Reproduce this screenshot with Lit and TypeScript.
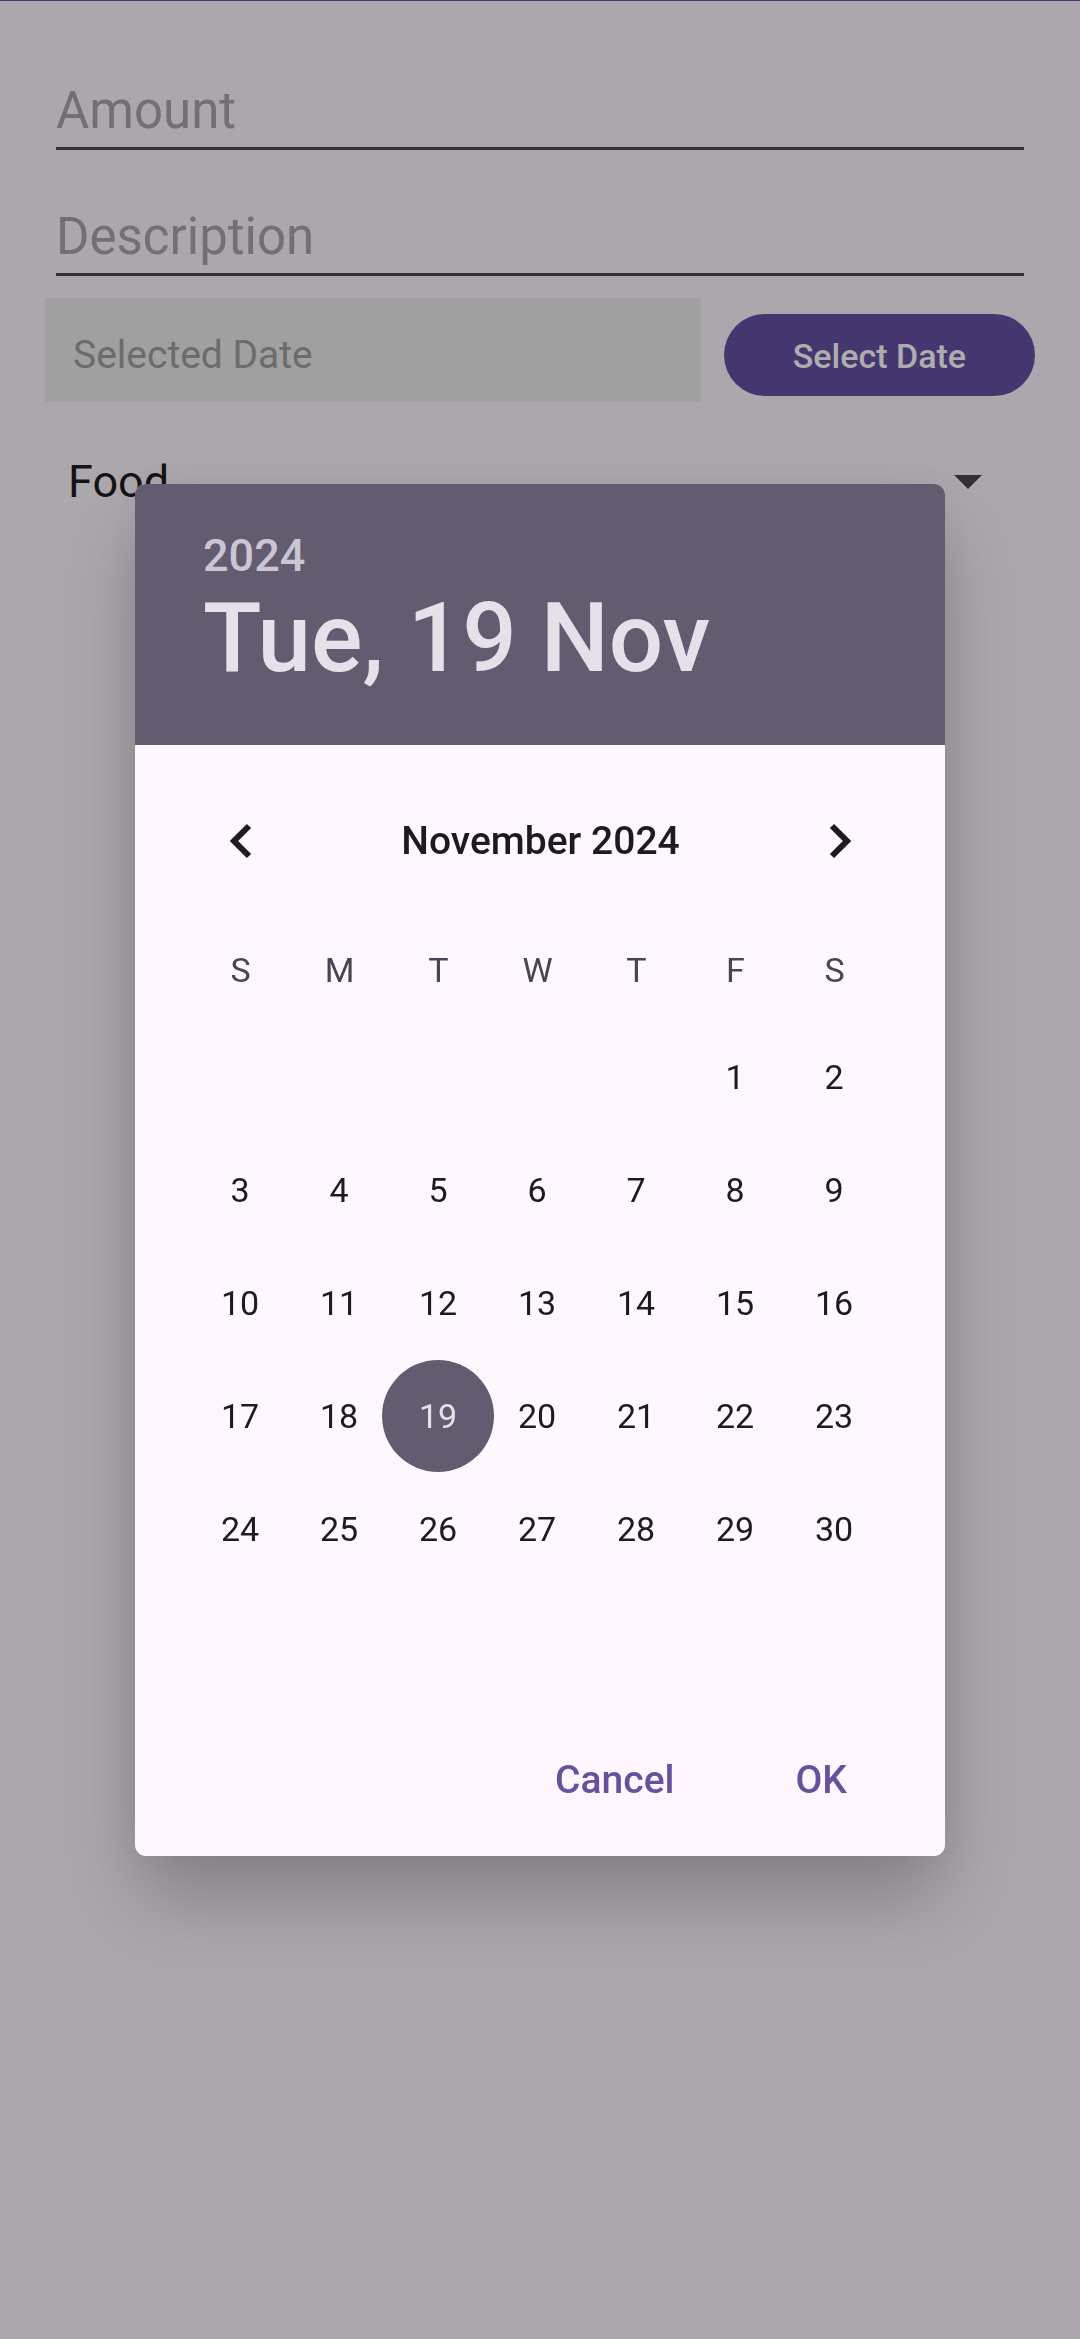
import { LitElement, html, css } from "lit";
import { customElement, property, state } from "lit/decorators.js";

const MONTHS = [
  "January", "February", "March", "April", "May", "June",
  "July", "August", "September", "October", "November", "December",
];
const WEEKDAYS = ["Sunday", "Monday", "Tuesday", "Wednesday", "Thursday", "Friday", "Saturday"];

/** Six calendar rows for a month; 0 stands for an empty cell. */
function monthRows(year: number, month: number): number[][] {
  const offset = new Date(year, month, 1).getDay();
  const count = new Date(year, month + 1, 0).getDate();
  return Array.from({ length: 6 }, (_, row) =>
    Array.from({ length: 7 }, (_, col) => {
      const day = row * 7 + col - offset + 1;
      return day >= 1 && day <= count ? day : 0;
    })
  );
}

@customElement("date-picker")
export class DatePicker extends LitElement {
  @property({ attribute: false }) selected = new Date(2024, 10, 19);
  @state() private year = 2024;
  @state() private month = 10;

  static styles = css`
    :host {
      display: flex;
      flex-direction: column;
      overflow: hidden;
      border-radius: 11px;
      background: #fef7ff;
      color: #1d1b20;
    }
    button {
      margin: 0;
      padding: 0;
      border: 0;
      background: none;
      color: inherit;
      font: inherit;
      cursor: pointer;
    }
    .header {
      display: flex;
      flex-direction: column;
      align-items: flex-start;
      padding: 45px 68px 52px;
      background: #635b70;
    }
    .year {
      color: #cbc4d2;
      font-size: 45px;
      font-weight: 500;
      line-height: 54px;
    }
    .date {
      margin: 0;
      color: #e6e0e9;
      font-size: 96px;
      font-weight: 500;
      line-height: 110px;
    }
    .month {
      display: flex;
      align-items: center;
      justify-content: space-between;
      padding: 40px 54px 23px 55px;
    }
    .month h2 {
      margin: 0;
      font-size: 39px;
      font-weight: 500;
      line-height: 46px;
    }
    .nav {
      display: flex;
      align-items: center;
      justify-content: center;
      width: 99px;
      height: 112px;
    }
    .nav svg {
      width: 68px;
      height: 68px;
      fill: none;
      stroke: #1d1b20;
      stroke-width: 6;
    }
    .grid {
      padding: 0 61px 0 56px;
    }
    table {
      width: 100%;
      table-layout: fixed;
      border-collapse: collapse;
      font-size: 34px;
      line-height: 40px;
    }
    th {
      height: 101px;
      padding: 0;
      color: #49454f;
      font-weight: 400;
    }
    td {
      height: 113px;
      padding: 0;
    }
    .day {
      display: block;
      width: 112px;
      height: 112px;
      margin: 0 -7px;
      border-radius: 50%;
    }
    .day.on {
      background: #635b70;
      color: #e6e0e9;
    }
    .actions {
      display: flex;
      justify-content: flex-end;
      gap: 53px;
      padding: 31px 64px 26px;
      color: #65529b;
      font-size: 39px;
      font-weight: 500;
      line-height: 46px;
    }
    .actions button {
      height: 100px;
      padding: 0 34px;
    }
  `;

  private step(by: number) {
    const next = new Date(this.year, this.month + by, 1);
    this.year = next.getFullYear();
    this.month = next.getMonth();
  }

  private pick(day: number) {
    this.selected = new Date(this.year, this.month, day);
  }

  private isSelected(day: number) {
    const s = this.selected;
    return s.getFullYear() === this.year && s.getMonth() === this.month && s.getDate() === day;
  }

  render() {
    const s = this.selected;
    const heading = `${WEEKDAYS[s.getDay()].slice(0, 3)}, ${s.getDate()} ${MONTHS[s.getMonth()].slice(0, 3)}`;
    return html`
      <header class="header">
        <button class="year">${s.getFullYear()}</button>
        <h1 class="date">${heading}</h1>
      </header>
      <div class="month">
        <button class="nav" aria-label="Previous month" @click=${() => this.step(-1)}>
          <svg viewBox="0 0 68 68"><path d="M43 19 L28 34 L43 49" /></svg>
        </button>
        <h2>${MONTHS[this.month]} ${this.year}</h2>
        <button class="nav" aria-label="Next month" @click=${() => this.step(1)}>
          <svg viewBox="0 0 68 68"><path d="M25 19 L40 34 L25 49" /></svg>
        </button>
      </div>
      <div class="grid">
        <table>
          <thead>
            <tr>${WEEKDAYS.map((d) => html`<th scope="col" abbr=${d}>${d[0]}</th>`)}</tr>
          </thead>
          <tbody>
            ${monthRows(this.year, this.month).map(
              (row) => html`<tr>
                ${row.map(
                  (day) => html`<td>
                    ${day
                      ? html`<button
                          class=${this.isSelected(day) ? "day on" : "day"}
                          @click=${() => this.pick(day)}
                        >${day}</button>`
                      : null}
                  </td>`
                )}
              </tr>`
            )}
          </tbody>
        </table>
      </div>
      <div class="actions">
        <button>Cancel</button>
        <button>OK</button>
      </div>
    `;
  }
}

@customElement("app-root")
export class AppRoot extends LitElement {
  static styles = css`
    :host {
      display: block;
      box-sizing: border-box;
      min-height: 100vh;
      border-top: 1px solid #6750a4;
      background: #fef7ff;
      font-family: Roboto, "Liberation Sans", sans-serif;
    }
    input,
    select,
    button {
      box-sizing: border-box;
      margin: 0;
      border: 0;
      border-radius: 0;
      outline: 0;
      background: none;
      font: inherit;
    }
    input::placeholder {
      color: #a8a5ab;
      opacity: 1;
    }
    .form {
      display: flex;
      flex-direction: column;
      padding: 80px 45px;
    }
    .fields {
      display: flex;
      flex-direction: column;
      gap: 57px;
      padding: 0 11px 22px;
    }
    .line {
      width: 100%;
      height: 69px;
      padding: 0 0 8px;
      border-bottom: 3px solid #4f4b55;
      font-size: 51px;
      line-height: 58px;
    }
    .row {
      display: flex;
      align-items: baseline;
      gap: 23px;
    }
    .chosen {
      flex: 1;
      min-width: 0;
      height: 104px;
      padding: 33px 28px 23px;
      background: #ececec;
      font-size: 39px;
      line-height: 48px;
    }
    .chosen::placeholder {
      color: #9f9f9f;
    }
    .pick {
      padding: 22px 69px 20px;
      border-radius: 41px;
      background: #6750a4;
      color: #fff;
      font-size: 34px;
      font-weight: 500;
      line-height: 40px;
    }
    .category {
      display: grid;
      align-items: center;
      padding-top: 53px;
    }
    .category select,
    .category svg {
      grid-area: 1 / 1;
    }
    .category select {
      appearance: none;
      width: 100%;
      padding: 0 23px;
      color: #1d1b20;
      font-size: 45px;
      line-height: 54px;
    }
    .category svg {
      justify-self: end;
      width: 28px;
      height: 14px;
      margin-right: 53px;
      fill: #49454f;
      pointer-events: none;
    }
    .scrim {
      position: fixed;
      inset: 0;
      display: flex;
      align-items: center;
      justify-content: center;
      background: rgba(0, 0, 0, 0.32);
    }
    date-picker {
      width: 75%;
      box-shadow: 0 45px 80px rgba(0, 0, 0, 0.23), 0 0 40px rgba(0, 0, 0, 0.05);
    }
  `;

  render() {
    return html`
      <main class="form">
        <div class="fields">
          <input class="line" inputmode="decimal" placeholder="Amount" aria-label="Amount" />
          <input class="line" placeholder="Description" aria-label="Description" />
        </div>
        <div class="row">
          <input class="chosen" readonly placeholder="Selected Date" aria-label="Selected Date" />
          <button class="pick">Select Date</button>
        </div>
        <div class="category">
          <select aria-label="Category">
            <option>Food</option>
          </select>
          <svg viewBox="0 0 28 14"><path d="M0 0 H28 L14 14 Z" /></svg>
        </div>
      </main>
      <div class="scrim">
        <date-picker role="dialog" aria-modal="true" aria-label="Select date"></date-picker>
      </div>
    `;
  }
}
